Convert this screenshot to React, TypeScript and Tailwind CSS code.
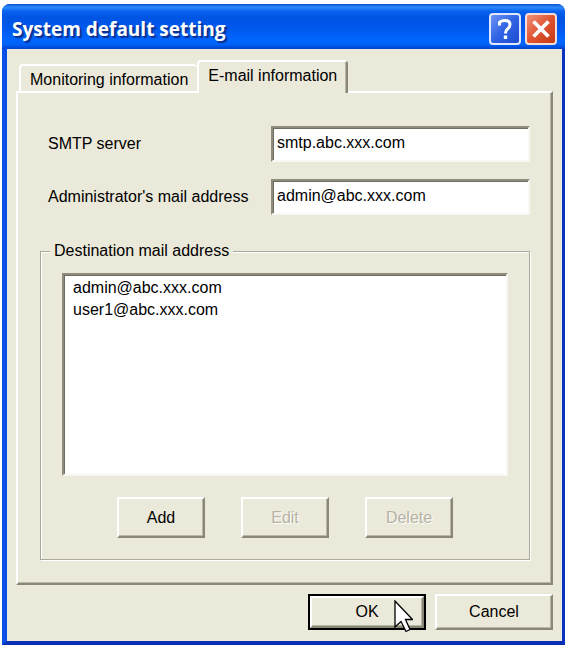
import { useState } from "react";
import type { ButtonHTMLAttributes } from "react";
import clsx from "clsx";

const tabs = ["Monitoring information", "E-mail information"];
const addresses = ["admin@abc.xxx.com", "user1@abc.xxx.com"];

const sunken =
  "bg-white border-2 border-t-[#8f8c7c] border-l-[#8f8c7c] border-r-[#f8f7f1] border-b-[#f8f7f1] shadow-[inset_1px_1px_0_#6f6d62] outline-none";

function PushButton({ className, ...props }: ButtonHTMLAttributes<HTMLButtonElement>) {
  return (
    <button
      type="button"
      className={clsx(
        "border-2 border-t-white border-l-white border-r-[#8a8776] border-b-[#8a8776] bg-[#ebe9d9] shadow-[inset_-1px_-1px_0_#b9b6a6] disabled:text-[#b5b2a3] disabled:[text-shadow:1px_1px_0_#fff]",
        className
      )}
      {...props}
    />
  );
}

function TitleBar() {
  return (
    <header className="flex h-[45px] items-center justify-between rounded-t-lg bg-[linear-gradient(180deg,#0b4fd0_0%,#2b8bfb_7%,#0a62ef_16%,#0054e3_30%,#0058ee_55%,#0066fe_80%,#0062f6_90%,#0040cf_100%)] pr-2 pl-2.5">
      <h1 className="pt-1 font-['Open_Sans',sans-serif] text-[19px] font-bold text-white [text-shadow:2px_2px_1px_#0a2f8f]">
        System default setting
      </h1>
      <div className="flex gap-1 pt-1">
        <button
          type="button"
          aria-label="Help"
          className="flex size-8 items-center justify-center rounded border-2 border-[#dfe7fb] bg-linear-to-br from-[#6d93f3] via-[#2f62e4] to-[#1c4dd0]"
        >
          <svg viewBox="0 0 28 28" className="size-7" fill="none" stroke="white">
            <path d="M8.5 10.5V7.5Q10 5.5 14 5.5Q19 5.5 19 9.5Q19 12 16.5 14Q14.5 15.5 14.5 18.5" strokeWidth="3" />
            <path d="M14.5 20.5V24" strokeWidth="3.4" />
          </svg>
        </button>
        <button
          type="button"
          aria-label="Close"
          className="flex size-8 items-center justify-center rounded border-2 border-[#f6ddd8] bg-linear-to-br from-[#ee9077] via-[#e0532f] to-[#c33a15]"
        >
          <svg viewBox="0 0 28 28" className="size-7" fill="none" stroke="white" strokeWidth="3.8">
            <path d="M6.5 6.5L21.5 21.5M21.5 6.5L6.5 21.5" />
          </svg>
        </button>
      </div>
    </header>
  );
}

export default function App() {
  const [activeTab, setActiveTab] = useState(1);
  const [server, setServer] = useState("smtp.abc.xxx.com");
  const [admin, setAdmin] = useState("admin@abc.xxx.com");

  return (
    <main className="bg-white pt-1 pl-0.5 font-['Liberation_Sans',Arial,sans-serif] text-base leading-[22px] text-black">
      <div className="rounded-t-lg bg-[#0a48dc]">
        <TitleBar />
        <div className="border-r-[3px] border-b-4 border-l-[5px] border-r-[#0a32c0] border-b-[#0a2fb4] border-l-[#0a50e6] bg-[#ebe9d9] pt-[11px] pr-[9px] pb-[11px] pl-[9px]">
          <div role="tablist" className="flex items-end pl-[3px]">
            {tabs.map((tab, i) => (
              <button
                key={tab}
                type="button"
                role="tab"
                aria-selected={activeTab === i}
                onClick={() => setActiveTab(i)}
                className={clsx(
                  "rounded-t-sm border-t-2 border-l-2 border-t-white border-l-white bg-[#ebe9d9]",
                  activeTab === i
                    ? "relative -mb-0.5 h-[33px] border-r-2 border-r-[#8a8776] px-[9px] pb-1 shadow-[inset_-1px_0_0_#b9b6a6]"
                    : "h-[27px] px-[9px] pt-0.5"
                )}
              >
                {tab}
              </button>
            ))}
          </div>

          <section className="border-2 border-t-white border-r-[#8a8776] border-b-[#8a8776] border-l-white pt-[33px] pr-[21px] pb-[23px] pl-[22px] shadow-[inset_-1px_-1px_0_#b9b6a6]">
            <div className="grid grid-cols-[231px_1fr] items-center gap-y-[17px]">
              <label htmlFor="server" className="pl-2">SMTP server</label>
              <input
                id="server"
                value={server}
                onChange={(e) => setServer(e.target.value)}
                className={clsx(sunken, "h-9 min-w-0 px-1 pb-0.5")}
              />
              <label htmlFor="admin" className="pl-2">Administrator's mail address</label>
              <input
                id="admin"
                value={admin}
                onChange={(e) => setAdmin(e.target.value)}
                className={clsx(sunken, "h-9 min-w-0 px-1 pb-0.5")}
              />
            </div>

            <fieldset className="mt-[25px] border border-[#aca899] px-[21px] pb-[21px] shadow-[1px_1px_0_#fff,inset_1px_1px_0_#fff]">
              <legend className="-ml-3 bg-[#ebe9d9] px-1">Destination mail address</legend>
              <select
                multiple
                aria-label="Destination mail address"
                className={clsx(sunken, "mt-[11px] block h-[203px] w-full overflow-hidden px-[9px] py-1")}
              >
                {addresses.map((address) => (
                  <option key={address} className="h-[22px] leading-[22px]">{address}</option>
                ))}
              </select>
              <div className="mt-[21px] flex justify-center gap-9">
                <PushButton className="h-[41px] w-[88px]">Add</PushButton>
                <PushButton className="h-[41px] w-[88px]" disabled>Edit</PushButton>
                <PushButton className="h-[41px] w-[88px]" disabled>Delete</PushButton>
              </div>
            </fieldset>
          </section>

          <footer className="mt-[9px] flex justify-end gap-[9px]">
            <div className="relative border-2 border-black">
              <PushButton className="h-8 w-[114px]">OK</PushButton>
              {/* mouse pointer */}
              <svg viewBox="0 0 19 33" className="pointer-events-none absolute top-1 left-[84px] h-[33px] w-[19px]">
                <path
                  d="M1 1V27L7 21.5L12 31.5L16 29.5L11.5 19.5H18.5Z"
                  fill="white"
                  stroke="black"
                  strokeWidth="1.3"
                />
              </svg>
            </div>
            <PushButton className="h-9 w-[118px]">Cancel</PushButton>
          </footer>
        </div>
      </div>
    </main>
  );
}
